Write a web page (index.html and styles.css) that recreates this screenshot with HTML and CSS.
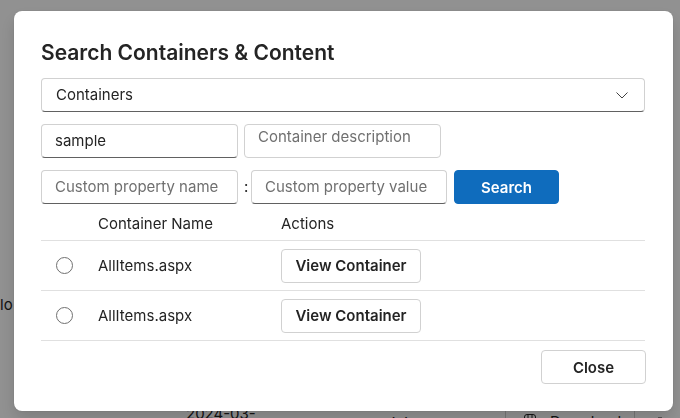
FILE: index.html
```html
<!DOCTYPE html>
<html lang="en">
<head>
<meta charset="utf-8">
<title>Search Containers &amp; Content</title>
<link rel="stylesheet" href="styles.css">
</head>
<body>
<div class="page">
  <div class="page-side">lo</div>
  <div class="page-row">
    <div class="cell cell-date">2024-03-<br>15</div>
    <div class="cell cell-author">MSP Administrator</div>
    <div class="cell cell-dl">
      <span class="dl-btn">
        <svg class="dl-icon" viewBox="0 0 16 16" width="16" height="16"><rect x="2.5" y="2.5" width="11" height="11" rx="2.5" fill="none" stroke="#242424" stroke-width="1"/><path d="M6 2.5v4h4v-4" fill="none" stroke="#242424" stroke-width="1"/></svg>
        Download
      </span>
    </div>
    <div class="cell cell-del">
      <svg viewBox="0 0 16 16" width="16" height="16"><path d="M6 3V2h4v1M2.5 3.5h11M4 3.5l.8 10h6.4l.8-10" fill="none" stroke="#242424" stroke-width="1"/></svg>
    </div>
  </div>
</div>

<div class="backdrop"></div>

<div class="dialog" role="dialog">
  <h2 class="title">Search Containers &amp; Content</h2>

  <div class="select">
    <span>Containers</span>
    <svg class="chevron" viewBox="0 0 12 7" width="12" height="7"><path d="M0.5 0.5L6 6L11.5 0.5" fill="none" stroke="#424242" stroke-width="1"/></svg>
  </div>

  <div class="field-row">
    <div class="input">sample</div>
    <div class="input textarea placeholder">Container description</div>
  </div>

  <div class="field-row">
    <div class="input placeholder">Custom property name</div>
    <span class="colon">:</span>
    <div class="input input-value placeholder">Custom property value</div>
    <button class="btn btn-primary">Search</button>
  </div>

  <div class="grid-table">
    <div class="grid-row grid-head">
      <span></span>
      <span>Container Name</span>
      <span>Actions</span>
    </div>
    <div class="grid-row">
      <span class="radio"></span>
      <span>AllItems.aspx</span>
      <span><button class="btn btn-view">View Container</button></span>
    </div>
    <div class="grid-row">
      <span class="radio"></span>
      <span>AllItems.aspx</span>
      <span><button class="btn btn-view">View Container</button></span>
    </div>
  </div>

  <div class="dialog-footer">
    <button class="btn btn-close">Close</button>
  </div>
</div>
</body>
</html>
```

FILE: styles.css
```css
* {
  box-sizing: border-box;
}

html,
body {
  margin: 0;
  padding: 0;
}

body {
  width: 680px;
  height: 418px;
  overflow: hidden;
  font-family: Inter, "Noto Sans", sans-serif;
  color: #242424;
  background: #ffffff;
}

/* underlying page */
.page {
  height: 418px;
  overflow: hidden;
  display: flex;
  flex-direction: column;
  font-size: 15px;
  line-height: 20px;
}

.page-side {
  margin-top: 295px;
}

.page-row {
  margin-top: 89px;
  display: flex;
  align-items: center;
  padding-left: 186px;
}

.cell-date {
  width: 136px;
}

.cell-author {
  width: 183px;
  white-space: nowrap;
  overflow: hidden;
}

.cell-dl {
  width: 147px;
  align-self: stretch;
}

.dl-btn {
  display: flex;
  align-items: flex-start;
  gap: 12px;
  width: 130px;
  height: 40px;
  border-left: 1px solid #d1d1d1;
  border-right: 1px solid #d1d1d1;
  padding: 8px 0 0 16px;
}

.cell-del {
  padding-top: 4px;
}

.backdrop {
  position: fixed;
  inset: 0;
  background: rgba(0, 0, 0, 0.43);
}

/* dialog */
.dialog {
  position: fixed;
  left: 14px;
  top: 11px;
  width: 659px;
  height: 400px;
  background: #ffffff;
  border-radius: 8px;
  padding: 25px 28px 28px 27px;
  box-shadow: 0 0 2px rgba(0, 0, 0, 0.12), 0 8px 16px rgba(0, 0, 0, 0.14);
  font-size: 15px;
  line-height: 20px;
}

.title {
  margin: 0 0 8px;
  font-size: 21px;
  line-height: 34px;
  font-weight: 600;
}

.select {
  height: 34px;
  display: flex;
  align-items: center;
  justify-content: space-between;
  padding: 0 16px 0 14px;
  border: 1px solid #d1d1d1;
  border-bottom-color: #616161;
  border-radius: 4px;
}

.field-row {
  display: flex;
  align-items: center;
  gap: 6px;
  margin-top: 12px;
}

.input {
  width: 197px;
  height: 34px;
  display: flex;
  align-items: center;
  padding: 0 13px;
  border: 1px solid #d1d1d1;
  border-bottom-color: #616161;
  border-radius: 4px;
}

.input.textarea {
  align-items: flex-start;
  padding-top: 2px;
  border-bottom-color: #d1d1d1;
}

.input.placeholder {
  color: #707070;
}

.input-value {
  width: 196px;
}

.colon {
  width: 1px;
  text-align: center;
}

.btn {
  height: 34px;
  font-family: inherit;
  font-size: 15px;
  font-weight: 600;
  color: #242424;
  background: #ffffff;
  border: 1px solid #d1d1d1;
  border-radius: 4px;
  padding: 0 12px;
}

.btn-primary {
  width: 105px;
  margin-left: 1px;
  background: #0f6cbd;
  border-color: #0f6cbd;
  color: #ffffff;
}

.btn-view {
  width: 140px;
}

.btn-close {
  width: 105px;
}

.grid-table {
  margin-top: 4px;
}

.grid-row {
  display: grid;
  grid-template-columns: 57px 183px 1fr;
  align-items: center;
  height: 50px;
  border-bottom: 1px solid #e0e0e0;
}

.grid-head {
  height: 33px;
  padding-bottom: 1px;
}

.radio {
  width: 17px;
  height: 17px;
  margin-left: 15px;
  border: 1px solid #707070;
  border-radius: 50%;
}

.dialog-footer {
  display: flex;
  justify-content: flex-end;
  margin-top: 9px;
  margin-right: -1px;
}
```
